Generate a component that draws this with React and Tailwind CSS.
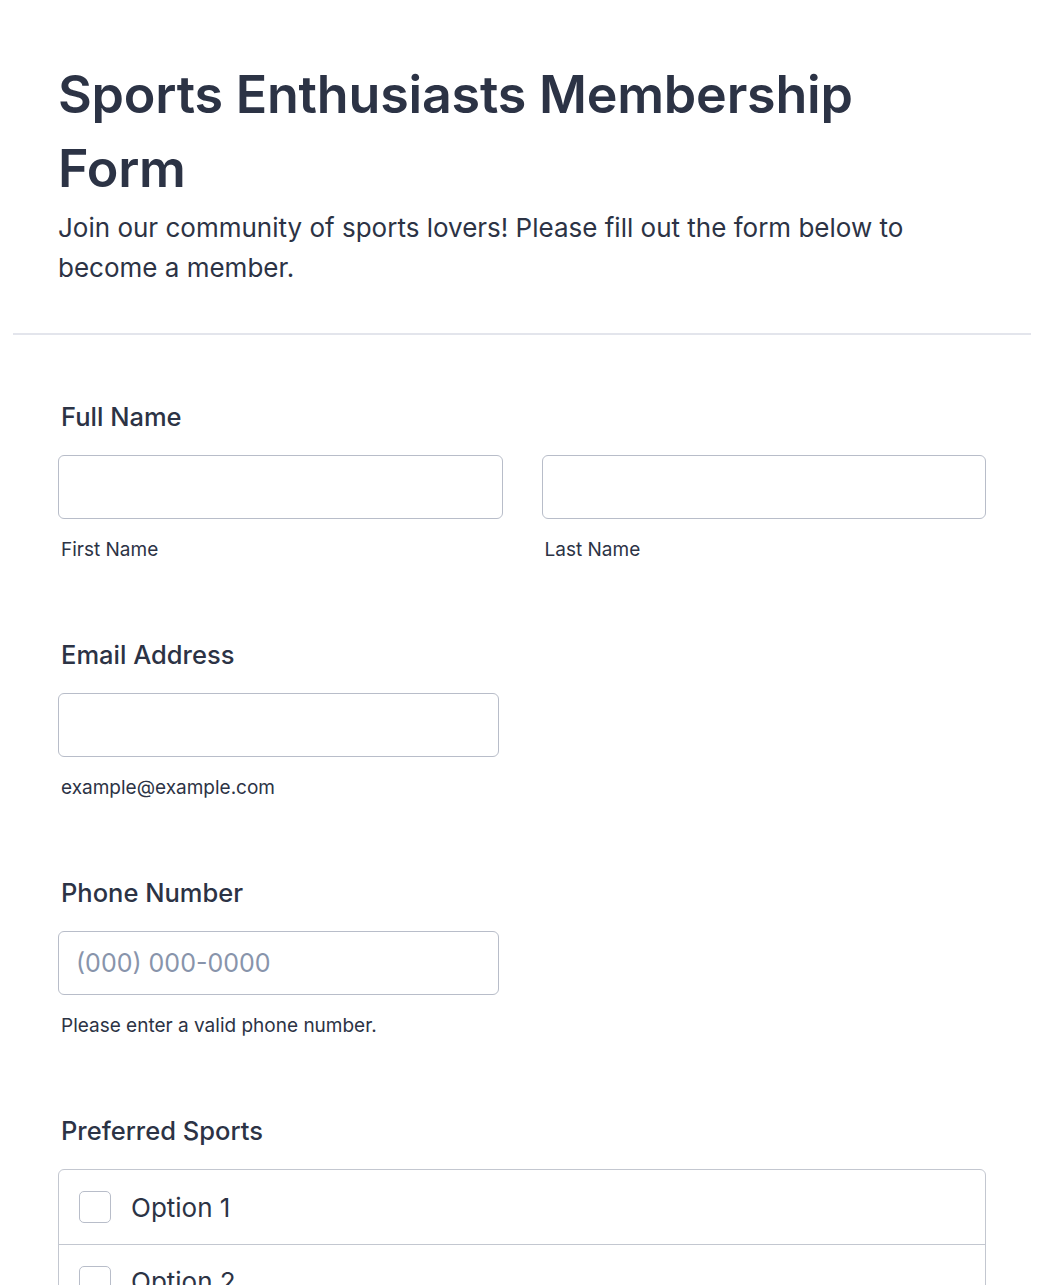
import React from 'react';

const Field = ({ label, children }) => (
    <div className="pb-[74px]">
        <label className="block pl-[3px] text-[25.5px] font-medium leading-[36px] text-[#2c3345]">{label}</label>
        <div className="mt-[20px]">{children}</div>
    </div>
);

const TextInput = ({ placeholder, className = '' }) => (
    <input
        type="text"
        placeholder={placeholder}
        className={`h-[64px] w-full rounded-[6px] border-[1.5px] border-[#b8bdc9] bg-white px-[17px] text-[25px] text-[#2c3345] placeholder:text-[#8894ab] outline-none ${className}`}
    />
);

const Sublabel = ({ children }) => (
    <div className="mt-[18px] pl-[3px] text-[19px] leading-[26px] text-[#2c3345]">{children}</div>
);

export default function App() {
    const options = ['Option 1', 'Option 2', 'Option 3'];

    return (
        <div className="min-h-screen bg-white font-['Inter',sans-serif] text-[#2c3345]">
            <div className="px-[13px]">
                <div className="px-[45px] pt-[58px] pb-[45px]">
                    <h1 className="text-[52px] font-semibold leading-[74px] tracking-[-0.2px]">
                        Sports Enthusiasts Membership Form
                    </h1>
                    <p className="mt-[2px] text-[26px] leading-[40px]">
                        Join our community of sports lovers! Please fill out the form below to become a member.
                    </p>
                </div>
                <div className="h-[2px] bg-[#e3e5ec]" />
            </div>

            <div className="px-[58px] pt-[64px]">
                <Field label="Full Name">
                    <div className="grid grid-cols-2 gap-[39px]">
                        <div>
                            <TextInput />
                            <Sublabel>First Name</Sublabel>
                        </div>
                        <div>
                            <TextInput />
                            <Sublabel>Last Name</Sublabel>
                        </div>
                    </div>
                </Field>

                <Field label="Email Address">
                    <div className="w-[441px]">
                        <TextInput />
                        <Sublabel>example@example.com</Sublabel>
                    </div>
                </Field>

                <Field label="Phone Number">
                    <div className="w-[441px]">
                        <TextInput placeholder="(000) 000-0000" />
                        <Sublabel>Please enter a valid phone number.</Sublabel>
                    </div>
                </Field>

                <Field label="Preferred Sports">
                    <div className="overflow-hidden rounded-[6px] border-[1.5px] border-[#c3c7d0]">
                        {options.map((opt, i) => (
                            <label
                                key={opt}
                                className={`flex h-[74px] items-center gap-[20px] px-[20px] ${i > 0 ? 'border-t-[1.5px] border-[#c3c7d0]' : ''}`}
                            >
                                <span className="h-[32px] w-[32px] rounded-[5px] border-[1.5px] border-[#b8bdc9] bg-white" />
                                <span className="text-[26px] text-[#2c3345]">{opt}</span>
                            </label>
                        ))}
                    </div>
                </Field>
            </div>
        </div>
    );
}
